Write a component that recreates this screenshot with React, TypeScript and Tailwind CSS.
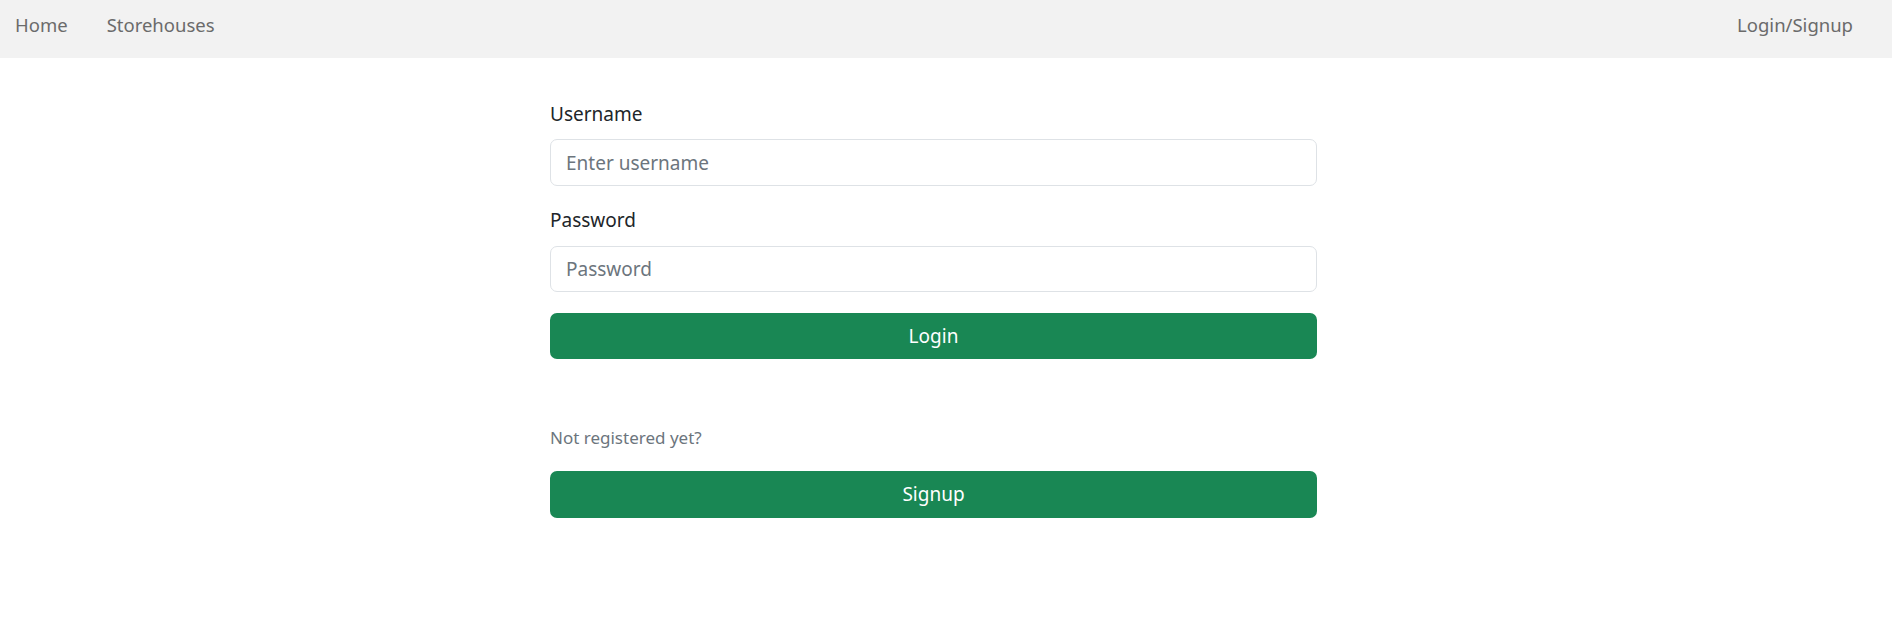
import React from "react";

export default function App() {
  const font = { fontFamily: '"Noto Sans", "Open Sans", Arial, sans-serif' };
  return (
    <div className="min-h-[637px] bg-white" style={font}>
      <nav className="h-[58px] bg-[#f2f2f2] flex items-start justify-between pt-[11px] pl-[15px] pr-[39px] text-[18.5px] leading-[28px] text-[#6b6b6b]">
        <div className="flex items-center gap-[39px]">
          <span>Home</span>
          <span>Storehouses</span>
        </div>
        <span>Login/Signup</span>
      </nav>
      <div className="pl-[550px] pt-[42px]">
        <div className="w-[767px] flex flex-col">
          <label className="text-[19px] leading-[29px] text-[#212529] mb-[10px]">Username</label>
          <input
            className="h-[47px] rounded-[7px] border border-[#dee2e6] px-[15px] text-[19px] text-[#212529] placeholder:text-[#6c757d] outline-none mb-[20px]"
            placeholder="Enter username"
          />
          <label className="text-[19px] leading-[29px] text-[#212529] mb-[11px]">Password</label>
          <input
            type="password"
            className="h-[46px] rounded-[7px] border border-[#dee2e6] px-[15px] text-[19px] text-[#212529] placeholder:text-[#6c757d] outline-none mb-[21px]"
            placeholder="Password"
          />
          <button className="h-[46px] rounded-[7px] bg-[#198754] text-white text-[19px]">Login</button>
          <p className="mt-[66px] text-[17px] leading-[25px] text-[#6c757d]">Not registered yet?</p>
          <button className="mt-[21px] h-[47px] rounded-[7px] bg-[#198754] text-white text-[19px]">Signup</button>
        </div>
      </div>
    </div>
  );
}
